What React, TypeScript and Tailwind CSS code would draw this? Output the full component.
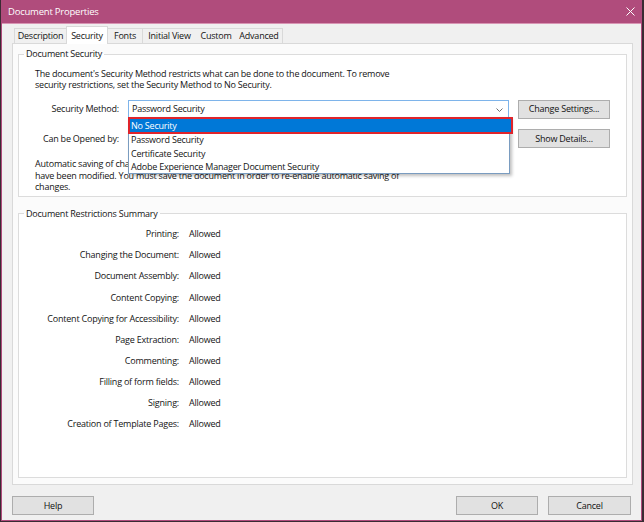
import React from 'react';

const tabs = [
  { label: 'Description', w: 'w-[52px]' },
  { label: 'Security', w: 'w-[42px]', active: true },
  { label: 'Fonts', w: 'w-[35px]' },
  { label: 'Initial View', w: 'w-[53px]' },
  { label: 'Custom', w: 'w-[40px]' },
  { label: 'Advanced', w: 'w-[47px]' },
];

const restrictions = [
  'Printing',
  'Changing the Document',
  'Document Assembly',
  'Content Copying',
  'Content Copying for Accessibility',
  'Page Extraction',
  'Commenting',
  'Filling of form fields',
  'Signing',
  'Creation of Template Pages',
];

const methods = [
  'No Security',
  'Password Security',
  'Certificate Security',
  'Adobe Experience Manager Document Security',
];

function Button({ children, className = '' }: { children: React.ReactNode; className?: string }) {
  return (
    <div
      className={`flex items-center justify-center bg-[#e1e1e1] border border-[#adadad] text-[#111] ${className}`}
    >
      {children}
    </div>
  );
}

export default function App() {
  return (
    <div className="w-[644px] h-[522px] bg-[#3a2b33] pl-px pr-[2px] pb-px font-['Open_Sans',sans-serif] text-[9px] tracking-[-0.22px] leading-[11.5px] text-[#141414]">
      <div className="h-full flex flex-col bg-[#f0f0f0] border-l border-r border-b border-[#b04c7c]">
        {/* title bar */}
        <div className="h-[24px] shrink-0 flex items-center justify-between bg-[#b04c7c] border-b border-[#d895b4] pl-[6px] pr-[6px]">
          <span className="text-white text-[9.5px]">Document Properties</span>
          <svg width="9" height="9" viewBox="0 0 9 9">
            <path d="M0.5 0.5 L8.5 8.5 M8.5 0.5 L0.5 8.5" stroke="#fff" strokeWidth="1" />
          </svg>
        </div>

        {/* tabs */}
        <div className="flex items-end ml-[12px] mt-[2px] h-[18px] relative z-10 -mb-px">
          {tabs.map((t, i) =>
            t.active ? (
              <div
                key={t.label}
                className={`${t.w} h-[18px] flex items-center justify-center bg-white border border-b-0 border-[#d9d9d9]`}
              >
                {t.label}
              </div>
            ) : (
              <div
                key={t.label}
                className={`${t.w} h-[16px] flex items-center justify-center bg-[#f0f0f0] border-t border-[#d9d9d9] border-b ${
                  i === 0 ? 'border-l' : ''
                } ${i === tabs.length - 1 ? 'border-r' : ''} ${i === 2 ? 'border-r' : ''}`}
              >
                {t.label}
              </div>
            ),
          )}
        </div>

        {/* panel */}
        <div className="relative ml-[10px] w-[621px] h-[442px] shrink-0 bg-[#fbfbfb] border border-[#d9d9d9] px-[5px] pt-[4px] pb-[6px] flex flex-col">
          <fieldset className="border border-[#dcdcdc] bg-white px-[16px] pb-[3px] shrink-0">
            <legend className="ml-[-11px] px-[2px] leading-[12px]">Document Security</legend>
            <div className="pt-[8px] leading-[11px] whitespace-nowrap">
              <div>The document's Security Method restricts what can be done to the document. To remove</div>
              <div>security restrictions, set the Security Method to No Security.</div>
            </div>

            <div className="flex items-center mt-[10px] h-[18px]">
              <div className="w-[84px] text-right">Security Method:</div>
              <div className="relative ml-[9px] w-[381px] h-[18px] bg-white border border-[#7eb4ea] flex items-center pl-[3px]">
                Password Security
                <svg width="7" height="4" viewBox="0 0 7 4" className="absolute right-[5px] top-[7px]">
                  <path d="M0.5 0.5 L3.5 3.5 L6.5 0.5" stroke="#707070" fill="none" strokeWidth="1" />
                </svg>
                {/* dropdown list */}
                <div className="absolute left-[-1px] top-[16px] w-[382px] h-[57px] bg-white border border-[#7a9cc0] shadow-[2px_2px_3px_rgba(0,0,0,0.25)] z-20">
                  {methods.map((m, i) =>
                    i === 0 ? (
                      <div
                        key={m}
                        className="h-[15px] flex items-center pl-[2px] bg-[#0078d7] text-white outline-2 outline-[#e0242b] -outline-offset-1 w-[383px]"
                      >
                        {m}
                      </div>
                    ) : (
                      <div key={m} className="h-[13.5px] flex items-center pl-[2px]">
                        {m}
                      </div>
                    ),
                  )}
                </div>
              </div>
              <Button className="ml-[9px] w-[92px] h-[19px]">Change Settings...</Button>
            </div>

            <div className="flex items-center mt-[11px] h-[19px]">
              <div className="w-[84px] text-right">Can be Opened by:</div>
              <div className="ml-[9px] w-[381px]" />
              <Button className="ml-[9px] w-[92px] h-[19px]">Show Details...</Button>
            </div>

            <div className="mt-[10px] whitespace-nowrap">
              <div>Automatic saving of changes to this document has been disabled because security settings</div>
              <div>have been modified. You must save the document in order to re-enable automatic saving of</div>
              <div>changes.</div>
            </div>
          </fieldset>

          <fieldset className="mt-[11px] border border-[#dcdcdc] bg-white flex-1">
            <legend className="ml-[5px] px-[2px] leading-[12px]">Document Restrictions Summary</legend>
            <div className="pt-[4px]">
              {restrictions.map((r) => (
                <div key={r} className="flex items-center h-[21.1px]">
                  <div className="w-[160px] text-right">{r}:</div>
                  <div className="ml-[10px]">Allowed</div>
                </div>
              ))}
            </div>
          </fieldset>
        </div>

        {/* buttons */}
        <div className="flex items-center mt-[11px] px-[10px]">
          <Button className="w-[82px] h-[19px]">Help</Button>
          <div className="flex-1" />
          <Button className="w-[82px] h-[19px]">OK</Button>
          <Button className="ml-[10px] w-[83px] h-[19px]">Cancel</Button>
        </div>
      </div>
    </div>
  );
}
